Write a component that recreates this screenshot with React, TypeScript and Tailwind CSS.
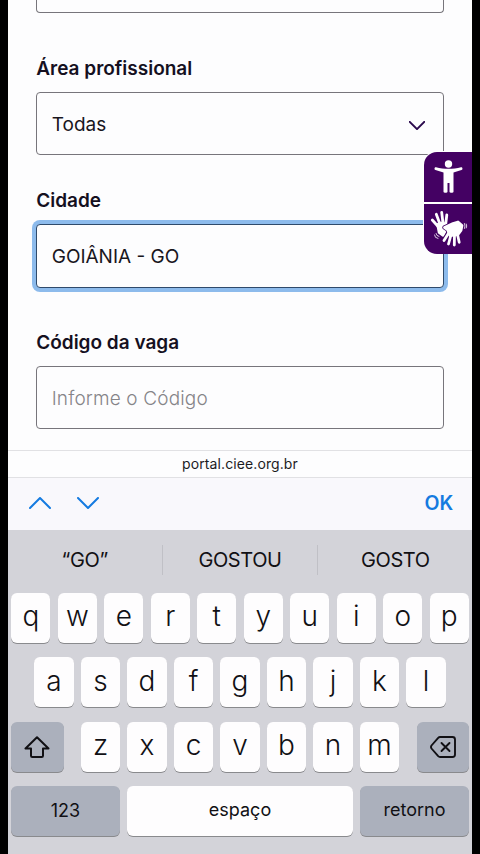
import { ReactNode } from 'react';
import clsx from 'clsx';

interface FieldProps {
  label: string;
  value?: string;
  placeholder?: string;
  focused?: boolean;
  icon?: ReactNode;
}

function Field({ label, value, placeholder, focused, icon }: FieldProps) {
  return (
    <div>
      <div className="h-6 pl-[0.5px] text-[19px] leading-6 font-semibold text-[#15101f]">{label}</div>
      <div
        className={clsx(
          'mt-[11px] flex items-center justify-between rounded-[4px] border bg-[#fdfdfe] pt-[3px] pl-[15px] pr-[18px] text-[19px]',
          focused ? 'h-16 border-[#2f4a6b] ring-4 ring-[#8dbbec]' : 'h-[63px] border-[#77757b]'
        )}
      >
        {value ? (
          <span className="text-[#19161d]">{value}</span>
        ) : (
          <span className="font-light text-[#858488] tracking-[0.15px]">{placeholder}</span>
        )}
        {icon}
      </div>
    </div>
  );
}

function Chevron({ className, up }: { className: string; up?: boolean }) {
  return (
    <svg viewBox="0 0 22 12" fill="none" stroke="currentColor" strokeLinecap="round" strokeLinejoin="round" className={className}>
      <path d={up ? 'M1 11 11 1l10 10' : 'M1 1l10 10L21 1'} vectorEffect="non-scaling-stroke" />
    </svg>
  );
}

const rightHand = 'M20.500 23.500 29 19.500l5-1.500 4 3.500-1 5-3 4-8 1-2.500-6z';
const rightFingers = 'M25 28.500 20 36.500M27.500 29 24.500 40M30.500 29.500 30.300 41M33 28l2.200 10.300';

function Accessibility() {
  return (
    <div className="absolute top-[151px] right-0 flex w-[49px] flex-col gap-[2px] rounded-l-[14px] bg-white pt-px pl-px">
      <div className="h-[50px] rounded-tl-[13px] bg-[#440163]">
        <svg viewBox="0 0 48 50" fill="white" className="h-[50px] w-12">
          <circle cx="24.500" cy="12" r="3.700" />
          <path d="M12 15.200c-1.500-.3-2.200 2.200-.5 2.800l8 2.600v19.100c0 1.300 4 1.300 4 0V31h2v8.700c0 1.300 4 1.300 4 0V20.600l8-2.600c1.700-.6 1-3.100-.5-2.800-8 2.200-17 2.200-25 0z" />
        </svg>
      </div>
      <div className="h-[50px] rounded-bl-[13px] bg-[#440163]">
        <svg viewBox="0 0 48 50" fill="none" stroke="white" strokeLinecap="round" strokeLinejoin="round" className="h-[50px] w-12">
          <path d="M13.500 20.500 17 19l5 1 1.500 3L19 31.500l-4-3z" fill="white" strokeWidth="2.500" />
          <path d="M15 23.500 8.300 16M16.300 21 12.300 10.200M19.200 21 17.700 8.300M21.500 22l1.300-11" strokeWidth="2.800" />
          <g stroke="#440163" strokeWidth="4.500">
            <path d={rightHand} />
            <path d={rightFingers} />
          </g>
          <path d={rightHand} fill="white" strokeWidth="2.800" />
          <path d={rightFingers} strokeWidth="2.800" />
          <path d="M10.500 31q0 3 3.500 3.500M12 29.500q.3 2.500 3 3M40.500 19.500q1.200 2.500 0 5M42.300 20q1 2 0 4" strokeWidth=".8" />
        </svg>
      </div>
    </div>
  );
}

function Key({ children, className }: { children: ReactNode; className?: string }) {
  return (
    <div
      className={clsx(
        'flex h-[50px] items-center justify-center rounded-[6px] shadow-[0_1px_0_#898a8d]',
        className ?? 'w-[39.2px] bg-[#fefdfe] pb-[3.5px] text-[28px] font-light'
      )}
    >
      {children}
    </div>
  );
}

function Letters({ keys }: { keys: string }) {
  return (
    <div className="flex gap-[7.3px]">
      {keys.split('').map((k) => (
        <Key key={k}>{k}</Key>
      ))}
    </div>
  );
}

export default function App() {
  return (
    <div className="flex h-[854px] w-[480px] justify-center overflow-hidden bg-black font-['Inter',sans-serif] text-[#111014]">
      <div className="relative flex w-[464.600px] flex-col bg-[#fdfdfe]">
        <div className="h-[450px] overflow-hidden px-7">
          <div className="h-[13px] rounded-b-[4px] border border-t-0 border-[#77757b]" />
          <div className="flex flex-col pt-[44px]">
            <Field label="Área profissional" value="Todas" icon={<Chevron className="mr-[0.5px] h-[9px] w-[16px] stroke-2 text-[#2b0a4d]" />} />
            <div className="mt-[34px] mb-[43px]">
              <Field label="Cidade" value="GOIÂNIA - GO" focused />
            </div>
            <Field label="Código da vaga" placeholder="Informe o Código" />
          </div>
        </div>

        <div className="flex h-[27.500px] items-center justify-center border-y border-[#e1e1e4] text-[14px] tracking-[0.1px] text-[#1c1b1f]">
          portal.ciee.org.br
        </div>

        <div className="flex h-[52px] items-center gap-[26px] bg-[#f9f8fc] pr-[19px] pl-[21.500px] text-[#157be0]">
          <Chevron className="mb-[2px] h-[12px] w-[22px] stroke-2" up />
          <Chevron className="mb-px h-[12px] w-[22px] stroke-2" />
          <span className="ml-auto text-[19.500px] font-semibold">OK</span>
        </div>

        <div className="flex-1 bg-[#d3d3d9]">
          <div className="flex h-[63.500px] items-center pb-[2px] text-center text-[20px] tracking-[-0.4px]">
            <span className="w-[154px]">“GO”</span>
            <span className="h-[30px] w-px bg-[#c0c0c6]" />
            <span className="flex-1">GOSTOU</span>
            <span className="h-[30px] w-px bg-[#c0c0c6]" />
            <span className="w-[154px]">GOSTO</span>
          </div>
          <div className="flex flex-col items-center gap-[14.300px] px-[3.500px]">
            <Letters keys="qwertyuiop" />
            <Letters keys="asdfghjkl" />
            <div className="flex w-full justify-between">
              <Key className="w-[52.300px] bg-[#abb0bc]">
                <svg viewBox="0 0 26 22" fill="none" stroke="currentColor" strokeWidth="2" strokeLinejoin="round" className="h-[22px] w-[26px]">
                  <path d="M13 1.200 1.500 12.500h5.500v7.200q0 1.300 1.300 1.300h9.400q1.300 0 1.300-1.300v-7.200h5.500z" />
                </svg>
              </Key>
              <Letters keys="zxcvbnm" />
              <Key className="w-[52.300px] bg-[#abb0bc]">
                <svg viewBox="0 0 26 22" fill="none" stroke="currentColor" strokeWidth="1.900" strokeLinecap="round" strokeLinejoin="round" className="h-[22px] w-[26px]">
                  <path d="M10 1h12.500q2.500 0 2.500 2.500v15q0 2.500-2.500 2.500H10q-1 0-1.800-.8L1.500 12.500q-1-1.500 0-3L8.200 1.800Q9 1 10 1z" />
                  <path d="M11.500 7l8 8m0-8-8 8" />
                </svg>
              </Key>
            </div>
            <div className="flex w-full justify-between text-[18px]">
              <Key className="w-[108.500px] bg-[#abb0bc]">123</Key>
              <Key className="w-[225.500px] bg-[#fefdfe] pb-[2px]">espaço</Key>
              <Key className="w-[108.500px] bg-[#abb0bc] pb-[2px]">retorno</Key>
            </div>
          </div>
        </div>

        <Accessibility />
      </div>
    </div>
  );
}
